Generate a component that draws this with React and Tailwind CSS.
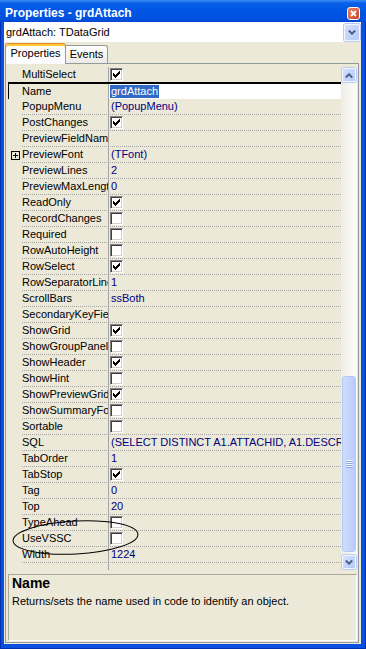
import React from 'react';

const props = [
  { name: 'MultiSelect', check: true },
  { name: 'Name', value: 'grdAttach', selected: true },
  { name: 'PopupMenu', value: '(PopupMenu)' },
  { name: 'PostChanges', check: true },
  { name: 'PreviewFieldName' },
  { name: 'PreviewFont', value: '(TFont)', expand: true },
  { name: 'PreviewLines', value: '2' },
  { name: 'PreviewMaxLength', value: '0' },
  { name: 'ReadOnly', check: true },
  { name: 'RecordChanges', check: false },
  { name: 'Required', check: false },
  { name: 'RowAutoHeight', check: false },
  { name: 'RowSelect', check: true },
  { name: 'RowSeparatorLine', value: '1' },
  { name: 'ScrollBars', value: 'ssBoth' },
  { name: 'SecondaryKeyField' },
  { name: 'ShowGrid', check: true },
  { name: 'ShowGroupPanel', check: false },
  { name: 'ShowHeader', check: true },
  { name: 'ShowHint', check: false },
  { name: 'ShowPreviewGrid', check: true },
  { name: 'ShowSummaryFooter', check: false },
  { name: 'Sortable', check: false },
  { name: 'SQL', value: '(SELECT DISTINCT A1.ATTACHID, A1.DESCR' },
  { name: 'TabOrder', value: '1' },
  { name: 'TabStop', check: true },
  { name: 'Tag', value: '0' },
  { name: 'Top', value: '20' },
  { name: 'TypeAhead', check: false },
  { name: 'UseVSSC', check: false },
  { name: 'Width', value: '1224' },
];

const CheckMark = () => (
  <svg width="7" height="7" viewBox="0 0 7 7" shapeRendering="crispEdges">
    <rect x="6" y="0" width="1" height="1" />
    <rect x="5" y="1" width="2" height="1" />
    <rect x="0" y="2" width="1" height="1" />
    <rect x="4" y="2" width="3" height="1" />
    <rect x="0" y="3" width="2" height="1" />
    <rect x="3" y="3" width="3" height="1" />
    <rect x="0" y="4" width="5" height="1" />
    <rect x="1" y="5" width="3" height="1" />
    <rect x="2" y="6" width="1" height="1" />
  </svg>
);

const CheckBox = ( { checked } ) => (
  <div className="w-[13px] h-[13px] shrink-0 bg-white border border-t-[#808080] border-l-[#808080] border-r-white border-b-white shadow-[inset_1px_1px_0_#404040,inset_-1px_-1px_0_#d4d0c8] flex items-center justify-center">
    {checked && <CheckMark />}
  </div>
);

const PlusBox = () => (
  <svg width="9" height="9" viewBox="0 0 9 9" shapeRendering="crispEdges">
    <rect x="0.5" y="0.5" width="8" height="8" fill="none" stroke="#000" />
    <rect x="2" y="4" width="5" height="1" />
    <rect x="4" y="2" width="1" height="5" />
  </svg>
);

const Chevron = ( { up } ) => (
  <svg width="8" height="5" viewBox="0 0 8 5">
    <path
      d={up ? 'M0.8 4.5 L4 1.3 L7.2 4.5' : 'M0.8 0.5 L4 3.7 L7.2 0.5'}
      fill="none"
      stroke="#4d6185"
      strokeWidth="2"
    />
  </svg>
);

const ScrollButton = ( { up } ) => (
  <div className="h-[16px] p-px">
    <div className="h-full rounded-[2px] border border-[#f3f7ff] shadow-[0_0_0_1px_#b9cbf5] bg-linear-to-br from-[#d4e0fe] to-[#b5c8f7] flex items-center justify-center">
      <Chevron up={up} />
    </div>
  </div>
);

const ScrollBar = () => (
  <div className="w-[16px] shrink-0 flex flex-col bg-linear-to-r from-[#eeede5] to-[#fdfdfa]">
    <ScrollButton up />
    <div className="flex-1 flex flex-col">
      <div className="h-[293px]" />
      <div className="h-[176px] mx-px rounded-[3px] border border-[#b4c8f6] bg-linear-to-r from-[#cfdcfd] to-[#b9ccf8] flex flex-col items-center justify-center">
        {[0, 1, 2, 3].map( i => (
          <div key={i}>
            <div className="w-[7px] h-px bg-[#eef3fe]" />
            <div className="w-[7px] h-px bg-[#8dacee]" />
          </div>
        ) )}
      </div>
    </div>
    <ScrollButton />
  </div>
);

const PropRow = ( { row, beforeSelected } ) => {
  const hasCheck = row.check !== undefined;

  if ( row.selected ) {
    return (
      <div className="flex h-4 border-t border-l border-black">
        <div className="w-[13px] shrink-0" />
        <div className="w-[87px] shrink-0 border-r border-[#a5a5a5] flex items-center whitespace-nowrap overflow-hidden">
          {row.name}
        </div>
        <div className="flex-1 min-w-0 bg-white flex items-center pl-px">
          <span className="bg-[#316ac5] text-white px-px leading-[13px]">{row.value}</span>
        </div>
      </div>
    );
  }

  return (
    <div className={`flex h-4 ${beforeSelected ? 'border-b border-black' : ''}`}>
      <div className="w-[14px] shrink-0 flex items-center justify-center">
        {row.expand && <PlusBox />}
      </div>
      <div className={`flex flex-1 min-w-0 ${beforeSelected ? '' : 'border-b border-dotted border-[#a5a5a5]'}`}>
        <div className="w-[87px] shrink-0 border-r border-solid border-[#a5a5a5] flex items-center whitespace-nowrap overflow-hidden">
          {row.name}
        </div>
        <div className={`flex-1 min-w-0 flex items-center whitespace-nowrap overflow-hidden text-[#000080] ${hasCheck ? 'pl-px' : 'pl-[2px]'}`}>
          {hasCheck ? <CheckBox checked={row.check} /> : row.value}
        </div>
      </div>
    </div>
  );
};

const Grid = () => (
  <div className="relative flex h-[503px] shrink-0">
    <div className="flex-1 min-w-0 flex flex-col">
      {props.map( ( p, i ) => (
        <PropRow key={p.name} row={p} beforeSelected={props[i + 1]?.selected} />
      ) )}
      <div className="flex flex-1">
        <div className="w-[14px] shrink-0" />
        <div className="w-[87px] shrink-0 border-r border-[#a5a5a5]" />
      </div>
    </div>
    <ScrollBar />
    {/* hand-drawn annotation circling UseVSSC */}
    <svg className="absolute inset-0 pointer-events-none" width="349" height="503">
      <ellipse
        cx="67.5"
        cy="470.5"
        rx="62.5"
        ry="16.5"
        transform="rotate(-3 67.5 470.5)"
        fill="none"
        stroke="#000"
        strokeWidth="1"
      />
    </svg>
  </div>
);

export default function App() {
  return (
    <div className="w-[366px] h-[649px] flex flex-col bg-[#0950e0] shadow-[inset_1px_0_0_#0030b0,inset_-1px_0_0_#0030b0,inset_0_-1px_0_#0030b0] font-['Liberation_Sans',Arial,sans-serif] text-[11px] text-black overflow-hidden">
      <div className="h-[22px] shrink-0 flex items-start justify-between pt-[7px] pl-[5px] pr-[6px] bg-[linear-gradient(to_bottom,#3d8df6_0px,#0a5fe8_3px,#0055e5_11px,#0051de_19px,#0046d0_22px)]">
        <span className="text-white font-bold text-[12px] leading-[12px]">Properties - grdAttach</span>
        <div className="w-[13px] h-[13px] rounded-[3px] border border-white bg-linear-to-br from-[#ec8466] to-[#c8401f] flex items-center justify-center">
          <svg width="7" height="7" viewBox="0 0 7 7">
            <path d="M1 1 L6 6 M6 1 L1 6" stroke="#fff" strokeWidth="1.8" />
          </svg>
        </div>
      </div>

      <div className="flex-1 ml-[4px] mr-[5px] mb-[5px] bg-[#ece9d8] flex flex-col">
        <div className="h-[20px] shrink-0 bg-white flex items-center justify-between pl-[2px]">
          <span className="leading-[13px]">grdAttach: TDataGrid</span>
          <div className="w-[16px] h-[17px] mr-px rounded-[2px] border border-[#f3f7ff] shadow-[0_0_0_1px_#b9cbf5] bg-linear-to-br from-[#d4e0fe] to-[#b5c8f7] flex items-center justify-center">
            <Chevron />
          </div>
        </div>

        <div className="h-[21px] shrink-0 flex items-end pl-px">
          <div className="relative z-10 -mb-px h-[21px] w-[61px] border border-b-0 border-[#919b9c] border-t-[#e68b2c] shadow-[inset_0_2px_0_#ffc83c] rounded-t-[3px] bg-[#fcfcfe] flex justify-center pt-[3px] leading-[13px]">
            Properties
          </div>
          <div className="h-[18px] w-[42px] border border-b-0 border-l-0 border-[#919b9c] rounded-tr-[3px] bg-linear-to-b from-white to-[#ecebe6] flex items-center justify-center leading-[13px]">
            Events
          </div>
        </div>

        <div className="flex-1 ml-px mr-[2px] mb-px border border-[#919b9c] pt-[3px] pl-[2px] pr-px flex flex-col">
          <Grid />
          <div className="mt-[4px] h-[67px] shrink-0 border border-t-[#aca899] border-l-[#aca899] border-r-white border-b-white pl-[3px]">
            <div className="font-bold text-[14px] leading-[17px]">Name</div>
            <div className="mt-[2px] leading-[14px]">Returns/sets the name used in code to identify an object.</div>
          </div>
        </div>
      </div>
    </div>
  );
}
